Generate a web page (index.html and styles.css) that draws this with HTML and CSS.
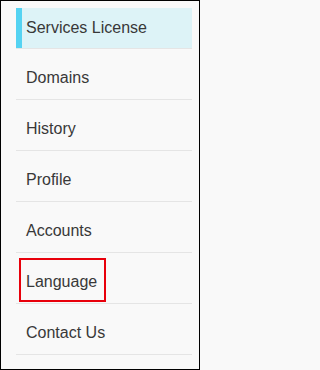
FILE: index.html
```html
<!DOCTYPE html>
<html lang="en">
<head>
<meta charset="utf-8">
<title>Menu</title>
<link rel="stylesheet" href="styles.css">
</head>
<body>
<nav class="frame">
  <ul class="menu">
    <li class="item item-first"><a class="link link-active" href="#">Services License</a></li>
    <li class="item"><a class="link" href="#">Domains</a></li>
    <li class="item"><a class="link" href="#">History</a></li>
    <li class="item"><a class="link" href="#">Profile</a></li>
    <li class="item"><a class="link" href="#">Accounts</a></li>
    <li class="item item-focus"><a class="link link-focus" href="#">Language</a></li>
    <li class="item"><a class="link" href="#">Contact Us</a></li>
  </ul>
</nav>
</body>
</html>
```
FILE: styles.css
```css
html, body {
  margin: 0;
  padding: 0;
}
body {
  width: 200px;
  height: 370px;
  background: #f9f9f9;
  font-family: "Liberation Sans", Arial, sans-serif;
}
.frame {
  box-sizing: border-box;
  width: 200px;
  height: 370px;
  border: 1px solid #000;
  padding: 7px 7px 0 15px;
}
.menu {
  list-style: none;
  margin: 0;
  padding: 0;
}
.item {
  padding: 9px 0 1px 0;
  border-bottom: 1px solid #e5e5e5;
}
.item-first {
  padding: 0;
}
.link {
  display: block;
  height: 40px;
  line-height: 40px;
  padding-left: 10px;
  font-size: 16px;
  color: #383838;
  text-decoration: none;
}
.link-active {
  background: #ddf3f7;
  border-left: 6px solid #55d3f2;
  padding-left: 4px;
}
.item-focus .link-focus {
  display: inline-block;
  vertical-align: top;
  height: 36px;
  line-height: 36px;
  margin: -4px 0 0 3px;
  padding: 4px 7px 0 5px;
  border: 2px solid #e8000b;
}
```
